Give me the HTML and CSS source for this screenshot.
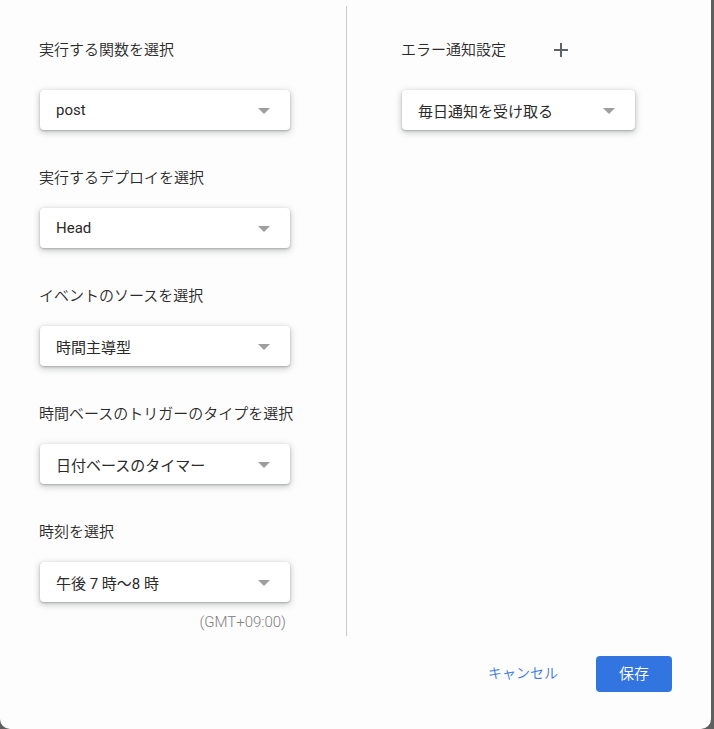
FILE: index.html
```html
<!DOCTYPE html>
<html lang="ja">
<head>
<meta charset="utf-8">
<link rel="stylesheet" href="styles.css">
</head>
<body>
<div class="dialog">
  <div class="columns">
    <div class="col-left">
      <div class="label first">実行する関数を選択</div>
      <div class="select"><span>post</span><i class="arrow"></i></div>
      <div class="label">実行するデプロイを選択</div>
      <div class="select"><span>Head</span><i class="arrow"></i></div>
      <div class="label">イベントのソースを選択</div>
      <div class="select"><span>時間主導型</span><i class="arrow"></i></div>
      <div class="label">時間ベースのトリガーのタイプを選択</div>
      <div class="select"><span>日付ベースのタイマー</span><i class="arrow"></i></div>
      <div class="label">時刻を選択</div>
      <div class="select"><span>午後 7 時〜8 時</span><i class="arrow"></i></div>
      <div class="tz">(GMT+09:00)</div>
    </div>
    <div class="col-right">
      <div class="label-row">
        <div class="label first">エラー通知設定</div>
        <svg class="plus" width="14" height="14" viewBox="0 0 14 14"><path d="M7 0v14M0 7h14" stroke="#5f6368" stroke-width="2"/></svg>
      </div>
      <div class="select narrow"><span>毎日通知を受け取る</span><i class="arrow"></i></div>
    </div>
  </div>
  <div class="footer">
    <button class="btn-text">キャンセル</button>
    <button class="btn-primary">保存</button>
  </div>
</div>
</body>
</html>
```
FILE: styles.css
```css
html, body {
  margin: 0;
  padding: 0;
  background: #5f5f5f;
}
body {
  width: 714px;
  height: 729px;
  overflow: hidden;
  font-family: Roboto, "Noto Sans CJK JP", sans-serif;
  font-weight: 300;
}
.dialog {
  width: 711px;
  height: 729px;
  background: #fdfdfd;
  border-radius: 0 0 10px 10px;
  display: flex;
  flex-direction: column;
}
.columns {
  display: flex;
  margin-top: 6px;
  height: 630px;
}
.col-left {
  width: 306px;
  padding-left: 40px;
  display: flex;
  flex-direction: column;
  align-items: flex-start;
}
.col-right {
  flex: 1;
  border-left: 1px solid #c8c8c8;
  padding-left: 55px;
  display: flex;
  flex-direction: column;
  align-items: flex-start;
}
.label {
  font-size: 15px;
  line-height: 20px;
  font-weight: 350;
  color: #2a2a2a;
  margin-top: 38px;
  margin-left: -1px;
}
.label.first {
  margin-top: 34px;
}
.label-row {
  display: flex;
  align-items: center;
}
.plus {
  margin-top: 34px;
  margin-left: 48px;
}
.select {
  margin-top: 20px;
  width: 250px;
  height: 40px;
  box-sizing: border-box;
  background: #fff;
  border-radius: 4px;
  box-shadow: 0 1px 2px rgba(60,64,67,0.3), 0 2px 6px 1px rgba(60,64,67,0.25);
  display: flex;
  align-items: center;
  justify-content: space-between;
  padding: 0 20px 0 16px;
  font-size: 15px;
  font-weight: 400;
  color: #2a2a2a;
}
.label.first + .select,
.label-row + .select {
  margin-top: 30px;
}
.select.narrow {
  width: 233px;
}
.arrow {
  width: 0;
  height: 0;
  border-left: 6px solid transparent;
  border-right: 6px solid transparent;
  border-top: 6px solid #9e9e9e;
  margin-top: 2px;
}
.tz {
  align-self: flex-end;
  margin-right: 60px;
  margin-top: 12px;
  font-size: 15px;
  line-height: 16px;
  color: #808080;
}
.footer {
  display: flex;
  justify-content: flex-end;
  align-items: center;
  margin-top: 20px;
  padding-right: 39px;
  gap: 38px;
}
.btn-text {
  border: none;
  background: none;
  font-family: inherit;
  font-weight: 350;
  font-size: 14px;
  line-height: 16px;
  color: #3b78e7;
  padding: 0 0 3px;
}
.btn-primary {
  border: none;
  background: #3375e0;
  color: #fff;
  font-family: inherit;
  font-weight: 350;
  font-size: 15px;
  width: 76px;
  height: 36px;
  border-radius: 4px;
  padding: 0 0 3px;
}
```
